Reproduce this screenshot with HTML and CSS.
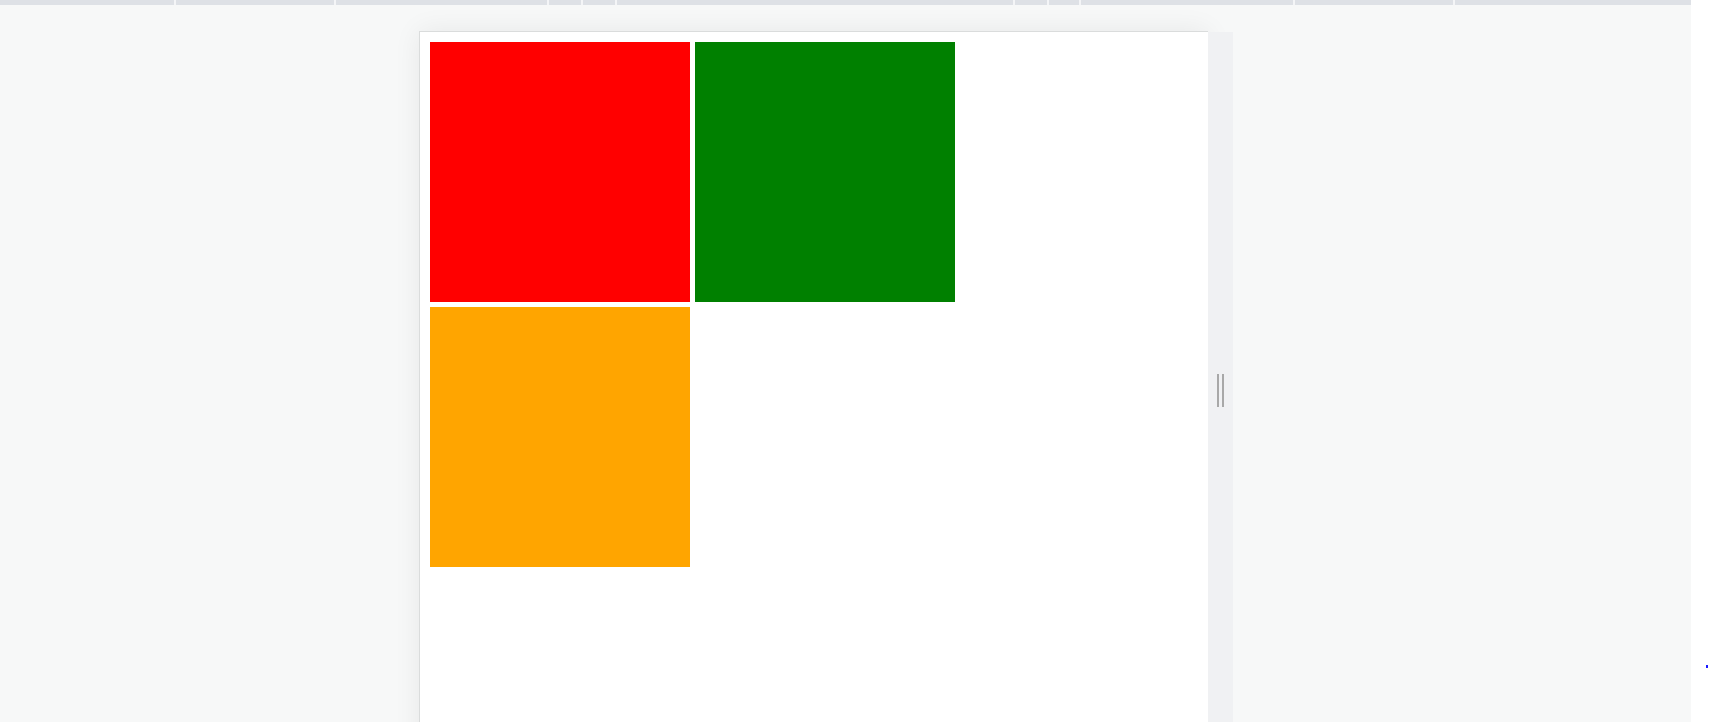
FILE: index.html
```html
<!DOCTYPE html>
<html lang="en">
<head>
<meta charset="utf-8">
<title>Flex wrap demo</title>
<link rel="stylesheet" href="styles.css">
</head>
<body>
<div class="app">
  <div class="ruler">
    <span class="seg s1"></span>
    <span class="seg s2"></span>
    <span class="seg s3"></span>
    <span class="seg s4"></span>
    <span class="seg s5"></span>
    <span class="seg s6"></span>
    <span class="seg s7"></span>
    <span class="seg s8"></span>
    <span class="seg s9"></span>
    <span class="seg s10"></span>
    <span class="seg last"></span>
  </div>
  <div class="stage">
    <div class="panel">
      <div class="box red"></div>
      <div class="box green"></div>
      <div class="box orange"></div>
    </div>
    <div class="resizer">
      <div class="grip"><span class="line"></span><span class="line"></span></div>
    </div>
  </div>
</div>
<span class="dot"></span>
</body>
</html>
```
FILE: styles.css
```css
html, body {
  margin: 0;
  padding: 0;
  background: #ffffff;
  height: 100%;
  overflow: hidden;
  font-family: "Liberation Sans", Arial, sans-serif;
}

.app {
  width: 1691px;
  height: 722px;
  background: #f7f8f8;
  overflow: hidden;
  display: flex;
  flex-direction: column;
}

.ruler {
  height: 5px;
  flex: none;
  display: flex;
  background: #dee1e6;
}

.seg {
  display: block;
  height: 5px;
  box-sizing: border-box;
  border-right: 2px solid #f4f5f7;
}
.s1 { width: 176px; }
.s2 { width: 160px; }
.s3 { width: 213px; }
.s4 { width: 34px; }
.s5 { width: 34px; }
.s6 { width: 398px; }
.s7 { width: 34px; }
.s8 { width: 32px; }
.s9 { width: 214px; }
.s10 { width: 160px; }
.seg.last { flex: 1; border-right: 0; }

.stage {
  display: flex;
  margin-top: 26px;
  margin-left: 419px;
  flex: 1;
  align-items: stretch;
}

.panel {
  width: 789px;
  height: 720px;
  flex: none;
  background: #ffffff;
  border-left: 1px solid #dadcdc;
  border-top: 1px solid #dadcdc;
  box-shadow: 0 0 26px rgba(0, 0, 0, 0.07);
  padding: 10px;
  box-sizing: border-box;
  display: flex;
  flex-wrap: wrap;
  align-content: flex-start;
  gap: 5px;
}

.box {
  width: 260px;
  height: 260px;
  flex: none;
}
.red { background: #ff0000; }
.green { background: #008000; }
.orange { background: #ffa500; }

.resizer {
  width: 25px;
  flex: none;
  margin-top: 1px;
  background: #f0f1f3;
  display: flex;
  justify-content: center;
}

.grip {
  margin-top: 342px;
  height: 33px;
  display: flex;
  gap: 3px;
}

.line {
  display: block;
  width: 2px;
  height: 33px;
  background: #a8a8a8;
}

.dot {
  position: absolute;
  left: 1706px;
  top: 665px;
  width: 2px;
  height: 3px;
  background: #1a1aff;
}
```
